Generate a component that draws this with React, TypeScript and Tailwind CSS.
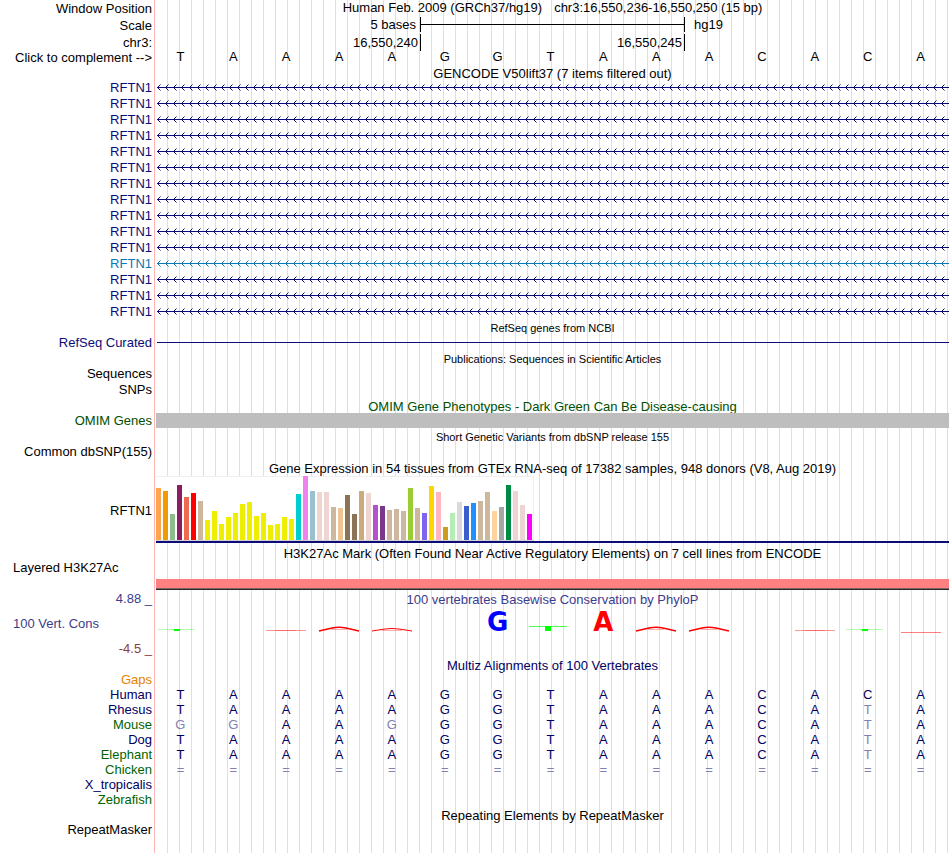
import React from 'react';
import clsx from 'clsx';

const SEQUENCE = 'TAAAAGGTAAACACA';

const GENE_ROWS = Array.from({ length: 15 }, (_, i) => (i === 11 ? 'light' : 'dark'));

// GTEx tissues: bar height in px, colour
const TISSUES: [number, string][] = [
  [52, '#ffa54f'], [49, '#ee9a00'], [26, '#8fbc8f'], [55, '#8b1c62'], [43, '#ee6a50'], [47, '#ff0000'],
  [39, '#cdb79e'], [20, '#eeee00'], [29, '#eeee00'], [16, '#eeee00'], [23, '#eeee00'], [27, '#eeee00'],
  [36, '#eeee00'], [38, '#eeee00'], [24, '#eeee00'], [27, '#eeee00'], [15, '#eeee00'], [16, '#eeee00'],
  [23, '#eeee00'], [21, '#eeee00'], [46, '#00cdcd'], [64, '#ee82ee'], [49, '#9ac0cd'], [48, '#eed5d2'],
  [48, '#eed5d2'], [33, '#cdb79e'], [32, '#eec591'], [45, '#8b7355'], [26, '#8b7355'], [49, '#cdaa7d'],
  [47, '#eed5d2'], [35, '#b452cd'], [34, '#7a378b'], [30, '#cdb79e'], [31, '#cdb79e'], [29, '#cdb79e'],
  [52, '#9acd32'], [32, '#cdb79e'], [27, '#7a67ee'], [54, '#ffd700'], [48, '#ffb6c1'], [13, '#cd9b1d'],
  [27, '#b4eeb4'], [38, '#d9d9d9'], [34, '#3a5fcd'], [37, '#1e90ff'], [39, '#cdb79e'], [48, '#cdb79e'],
  [29, '#ffd39b'], [33, '#a6a6a6'], [55, '#008b45'], [49, '#eed5d2'], [35, '#eed5d2'], [26, '#ff00ff'],
];

const SPECIES = [
  { name: 'Human', bases: 'TAAAAGGTAAACACA', color: 'text-[#000064]' },
  { name: 'Rhesus', bases: 'TAAAAGGTAAACATA', color: 'text-[#000064]' },
  { name: 'Mouse', bases: 'GGAAGGGTAAACATA', color: 'text-[#006400]' },
  { name: 'Dog', bases: 'TAAAAGGTAAACATA', color: 'text-[#000064]' },
  { name: 'Elephant', bases: 'TAAAAGGTAAACATA', color: 'text-[#006400]' },
  { name: 'Chicken', bases: '===============', color: 'text-[#006400]' },
  { name: 'X_tropicalis', bases: '', color: 'text-[#000064]' },
  { name: 'Zebrafish', bases: '', color: 'text-[#006400]' },
];

// conservation score drawn for each base, '' where there is none
const LOGO = ['t', '', 'flat', 'peak', 'low', '', 'G', 'T', 'A', 'peak', 'peak', '', 'flat', 't', 'below'];

interface RowProps {
  label?: React.ReactNode;
  labelClass?: string;
  className: string;
  children?: React.ReactNode;
}

function Row({ label, labelClass, className, children }: RowProps) {
  return (
    <div className={clsx('flex', className)}>
      <div className={clsx('flex w-[154px] shrink-0 items-center justify-end pr-0.5 whitespace-nowrap', labelClass)}>
        {label}
      </div>
      <div className="min-w-0 flex-1 border-l border-[#ffb4b4] pl-px">
        <div className="h-full bg-[linear-gradient(to_right,transparent_11px,#dcdcfa_11px)] bg-[length:12px_12px]">
          {children}
        </div>
      </div>
    </div>
  );
}

interface TitleProps {
  text: string;
  rowClass?: string;
  className?: string;
}

function Title({ text, rowClass = 'h-[15px]', className = 'pt-0.5' }: TitleProps) {
  return (
    <Row className={rowClass}>
      <h2 className={clsx('flex h-full items-center justify-center whitespace-nowrap', className)}>{text}</h2>
    </Row>
  );
}

function BaseGrid({ children }: { children: React.ReactNode }) {
  return <div className="-ml-0.5 mr-0.5 grid h-full grid-cols-15 items-center justify-items-center">{children}</div>;
}

function GeneLine({ id, tone }: { id: string; tone: string }) {
  return (
    <svg className={clsx('block h-4 w-full', tone === 'light' ? 'text-[#0c78b4]' : 'text-[#0c0c78]')}>
      <defs>
        <pattern id={id} width="8" height="16" patternUnits="userSpaceOnUse">
          <path d="M4.5 4.5L1.5 7.5L4.5 10.5" fill="none" stroke="currentColor" />
        </pattern>
      </defs>
      <rect x="1" y="7" width="100%" height="1" fill="currentColor" />
      <rect width="100%" height="16" fill={`url(#${id})`} />
    </svg>
  );
}

function LogoMark({ kind }: { kind: string }) {
  if (kind === '') return <span />;
  if (kind === 'G' || kind === 'A') {
    return (
      <span
        className={clsx(
          "font-['DejaVu_Sans',sans-serif] text-[26px] leading-6 font-bold",
          kind === 'G' ? 'text-[#0000ff]' : 'text-[#ff0000]'
        )}
      >
        {kind}
      </span>
    );
  }
  return (
    <svg width="44" height="24" viewBox="0 0 44 24" fill="none">
      {kind === 't' && (
        <>
          <path d="M0 19.5H37" stroke="#00ff00" strokeOpacity="0.3" />
          <path d="M16 20H22" stroke="#00ff00" strokeWidth="2" />
        </>
      )}
      {kind === 'T' && (
        <>
          <path d="M1 16.5H39" stroke="#00ff00" strokeOpacity="0.7" />
          <path d="M17 18.5H23" stroke="#00ff00" strokeWidth="5" />
        </>
      )}
      {kind === 'peak' && (
        <>
          <path d="M2 21L15 18Q22 16.5 29 18L42 21" stroke="#ff0000" strokeWidth="1.5" />
          <path d="M14 19.5H30" stroke="#ff0000" strokeOpacity="0.3" />
        </>
      )}
      {kind === 'low' && (
        <>
          <path d="M2 21L15 19Q22 18 29 19L42 21" stroke="#ff0000" />
          <path d="M12 20.5H32" stroke="#ff0000" strokeOpacity="0.3" />
        </>
      )}
      {kind === 'flat' && (
        <>
          <path d="M2 20.5H42" stroke="#ff0000" strokeOpacity="0.4" />
          <path d="M12 20.5H32" stroke="#ff0000" strokeOpacity="0.3" />
        </>
      )}
      {kind === 'below' && <path d="M2 22.5H42" stroke="#ff0000" strokeOpacity="0.5" />}
    </svg>
  );
}

export default function App() {
  return (
    <main className="flex min-h-screen flex-col bg-white pr-px font-['Liberation_Sans',Arial,sans-serif] text-[13px] leading-[15px] text-black">
      <Row label="Window Position" className="h-4">
        <h1 className="flex h-[15px] items-center justify-center gap-3 whitespace-nowrap">
          <span>Human Feb. 2009 (GRCh37/hg19)</span>
          <span>chr3:16,550,236-16,550,250 (15 bp)</span>
        </h1>
      </Row>
      <Row label="Scale" className="h-[18px]">
        <div className="mr-px grid h-full grid-cols-3 py-px">
          <span className="pr-1 text-right">5 bases</span>
          <div className="flex h-[15px] items-center border-l border-black">
            <div className="h-px w-full bg-black" />
          </div>
          <span className="h-[15px] border-l border-black pl-[9px]">hg19</span>
        </div>
      </Row>
      <Row label="chr3:" className="h-[17px]">
        <div className="mr-px grid h-[15px] grid-cols-3 text-right leading-[17px]">
          <span className="pr-0.5">16,550,240</span>
          <span className="border-l border-black pr-0.5">16,550,245</span>
          <span className="border-l border-black" />
        </div>
      </Row>
      <Row
        label={<button type="button" className="cursor-pointer">Click to complement --&gt;</button>}
        labelClass="pb-0.5"
        className="h-[15px]"
      >
        <div className="h-[11px] leading-[11px]">
          <BaseGrid>
            {SEQUENCE.split('').map((base, i) => (
              <span key={i}>{base}</span>
            ))}
          </BaseGrid>
        </div>
      </Row>

      <Title text="GENCODE V50lift37 (7 items filtered out)" rowClass="h-[14px]" className="pt-0" />
      {GENE_ROWS.map((tone, i) => (
        <Row
          key={i}
          label="RFTN1"
          labelClass={clsx('pb-px', tone === 'light' ? 'text-[#0c78b4]' : 'text-[#0c0c78]')}
          className="h-4"
        >
          <GeneLine id={`strand-${i}`} tone={tone} />
        </Row>
      ))}

      <Title text="RefSeq genes from NCBI" className="pt-0.5 text-[11px]" />
      <Row label="RefSeq Curated" labelClass="pb-px text-[#0c0c78]" className="h-4">
        <div className="flex h-[15px] items-center pl-px">
          <div className="h-px w-full bg-[#0c0c78]" />
        </div>
      </Row>

      <Title text="Publications: Sequences in Scientific Articles" className="pt-0.5 text-[11px]" />
      <Row label="Sequences" labelClass="pb-px" className="h-4" />
      <Row label="SNPs" labelClass="pb-px" className="h-4" />

      <Title text="OMIM Gene Phenotypes - Dark Green Can Be Disease-causing" className="pt-0.5 text-[#005000]" />
      <Row label="OMIM Genes" labelClass="pb-px text-[#005000]" className="h-4">
        <div className="h-[15px] bg-[#bebebe]" />
      </Row>

      <Title text="Short Genetic Variants from dbSNP release 155" className="pt-0.5 text-[11px]" />
      <Row label="Common dbSNP(155)" labelClass="pb-px" className="h-4" />

      <Title
        text="Gene Expression in 54 tissues from GTEx RNA-seq of 17382 samples, 948 donors (V8, Aug 2019)"
        rowClass="h-4"
        className="pt-0"
      />
      <Row label="RFTN1" labelClass="pt-0.5" className="h-[67px]">
        <div className="border-b-2 border-[#0c0c78]">
          <div className="flex h-[65px] w-[378px] items-end gap-0.5 border-b border-[#d2d2d2] bg-white shadow-[inset_-1px_1px_0_#f0f0f0]">
            {TISSUES.map(([height, color], i) => (
              <div key={i} className="w-[5px] shrink-0" style={{ height, backgroundColor: color }} />
            ))}
          </div>
        </div>
      </Row>

      <Title
        text="H3K27Ac Mark (Often Found Near Active Regulatory Elements) on 7 cell lines from ENCODE"
        rowClass="h-[18px]"
      />
      <Row
        label={<span className="w-full pl-[13px]">Layered H3K27Ac</span>}
        labelClass="pb-4"
        className="h-[29px]"
      >
        <div className="flex h-full flex-col justify-end">
          <div className="h-[9px] bg-[#ff8080]" />
          <div className="h-px bg-[#806464]" />
          <div className="h-px bg-[#282828]" />
        </div>
      </Row>

      <Row
        label={
          <div className="flex h-full w-full flex-col justify-between text-right leading-[17px]">
            <span className="text-[#3c3c8c]">4.88 _</span>
            <span className="pl-[13px] text-left text-[#3c3c8c]">100 Vert. Cons</span>
            <span className="text-[#8c3c3c]">-4.5 _</span>
          </div>
        }
        className="h-[67px]"
      >
        <h2 className="flex h-5 items-center justify-center pb-0.5 whitespace-nowrap text-[#3c3c8c]">
          100 vertebrates Basewise Conservation by PhyloP
        </h2>
        <div className="h-6">
          <BaseGrid>
            {LOGO.map((kind, i) => (
              <LogoMark key={i} kind={kind} />
            ))}
          </BaseGrid>
        </div>
      </Row>

      <Title text="Multiz Alignments of 100 Vertebrates" className="pt-0.5 text-[#000064]" />
      <Row label="Gaps" labelClass="text-[#e68200]" className="h-[15px]" />
      {SPECIES.map(({ name, bases, color }) => (
        <Row key={name} label={name} labelClass={color} className="h-[15px]">
          <BaseGrid>
            {bases.split('').map((base, i) => (
              <span key={i} className={base === SEQUENCE[i] ? 'text-[#000064]' : 'text-[#8080b4]'}>
                {base}
              </span>
            ))}
          </BaseGrid>
        </Row>
      ))}

      <Title text="Repeating Elements by RepeatMasker" />
      <Row label="RepeatMasker" className="h-[15px]" />
      <Row className="min-h-4 flex-1" />
    </main>
  );
}
